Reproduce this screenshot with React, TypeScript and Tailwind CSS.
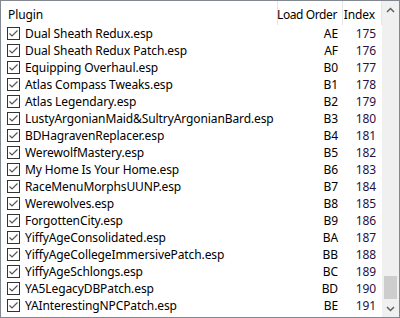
const rows: [string, string, string][] = [
  ["Dual Sheath Redux.esp", "AE", "175"],
  ["Dual Sheath Redux Patch.esp", "AF", "176"],
  ["Equipping Overhaul.esp", "B0", "177"],
  ["Atlas Compass Tweaks.esp", "B1", "178"],
  ["Atlas Legendary.esp", "B2", "179"],
  ["LustyArgonianMaid&SultryArgonianBard.esp", "B3", "180"],
  ["BDHagravenReplacer.esp", "B4", "181"],
  ["WerewolfMastery.esp", "B5", "182"],
  ["My Home Is Your Home.esp", "B6", "183"],
  ["RaceMenuMorphsUUNP.esp", "B7", "184"],
  ["Werewolves.esp", "B8", "185"],
  ["ForgottenCity.esp", "B9", "186"],
  ["YiffyAgeConsolidated.esp", "BA", "187"],
  ["YiffyAgeCollegeImmersivePatch.esp", "BB", "188"],
  ["YiffyAgeSchlongs.esp", "BC", "189"],
  ["YA5LegacyDBPatch.esp", "BD", "190"],
  ["YAInterestingNPCPatch.esp", "BE", "191"],
];

const Check = () => (
  <span className="w-[13px] h-[13px] shrink-0 border border-[#333333] bg-white flex items-center justify-center">
    <svg width="11" height="11" viewBox="0 0 11 11">
      <polyline points="1.5,5.5 4,8 9.5,2.5" fill="none" stroke="#555555" strokeWidth="1.2" />
    </svg>
  </span>
);

const Chevron = ({ up }: { up?: boolean }) => (
  <svg width="9" height="6" viewBox="0 0 9 6">
    <polyline
      points={up ? "1,5 4.5,1.5 8,5" : "1,1 4.5,4.5 8,1"}
      fill="none"
      stroke="#606060"
      strokeWidth="1.5"
    />
  </svg>
);

const App = () => {
  return (
    <div
      className="w-[400px] h-[318px] border border-[#828790] bg-white flex overflow-hidden text-[12px] tracking-[-0.1px] text-black"
      style={{ fontFamily: '"Noto Sans", "Open Sans", sans-serif' }}
    >
      <div className="w-[381px] flex flex-col">
        <div className="h-[24px] flex shrink-0 whitespace-nowrap">
          <div className="w-[277px] border-r border-[#e5e5e5] pl-[7px] pt-1 leading-[20px]">Plugin</div>
          <div className="w-[65px] border-r border-[#e5e5e5] pr-[5px] pt-1 leading-[20px] flex justify-end">
            <span className="tracking-[-0.4px]">Load Order</span>
          </div>
          <div className="w-[39px] border-r border-[#e5e5e5] pr-[6px] pt-1 leading-[20px] flex justify-end">
            <span>Index</span>
          </div>
        </div>
        {rows.map(([name, lo, idx]) => (
          <div key={name} className="h-[17px] flex items-center leading-[17px] shrink-0 whitespace-nowrap">
            <div className="w-[277px] flex items-center gap-[5px] pl-[6px]">
              <Check />
              <span>{name}</span>
            </div>
            <div className="w-[65px] text-right pr-[5px]">{lo}</div>
            <div className="w-[39px] text-right pr-[6px] text-[#2a0f45]">{idx}</div>
          </div>
        ))}
      </div>
      <div className="w-[17px] bg-[#f0f0f0] flex flex-col">
        <div className="h-[17px] flex items-center justify-center">
          <Chevron up />
        </div>
        <div className="flex-1 flex flex-col justify-end px-[2px] pb-[1px]">
          <div className="h-[23px] bg-[#cdcdcd]" />
        </div>
        <div className="h-[17px] flex items-center justify-center">
          <Chevron />
        </div>
      </div>
    </div>
  );
};

export default App;
